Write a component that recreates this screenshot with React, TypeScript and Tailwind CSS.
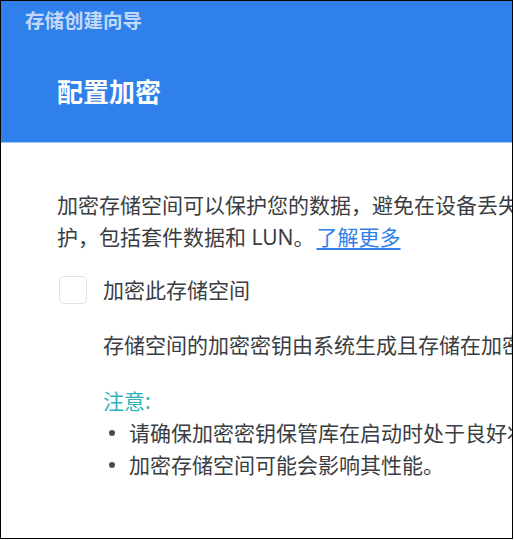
import { Check } from "lucide-react";
import { useState } from "react";

const font = { fontFamily: '"Noto Sans", "Noto Sans CJK SC", sans-serif' };

function Bullet({ children }: { children: React.ReactNode }) {
  return (
    <li className="flex items-center h-[32px] whitespace-nowrap">
      <span className="w-[6px] h-[6px] rounded-full bg-[#4a4d52] ml-[6px] mr-[14px] shrink-0" />
      {children}
    </li>
  );
}

export default function App() {
  const [checked, setChecked] = useState(false);

  return (
    <div
      className="w-[513px] h-[539px] border border-black bg-white overflow-hidden flex flex-col"
      style={font}
    >
      {/* Wizard header */}
      <div className="h-[142px] shrink-0 bg-[#2f80ea] border-b border-[#9fc3f4] flex flex-col">
        <div className="pl-[24px] pt-[5px] text-[19.5px] leading-[29px] font-bold text-[#c2d9f8] whitespace-nowrap">
          存储创建向导
        </div>
        <div className="pl-[56px] mt-[39px] text-[26px] leading-[36px] font-bold text-white whitespace-nowrap">
          配置加密
        </div>
      </div>

      {/* Body */}
      <div className="pl-[56px] pt-[46px] text-[21px] leading-[32px] text-[#3a3d42] w-[800px]">
        <p className="whitespace-nowrap">
          加密存储空间可以保护您的数据，避免在设备丢失或被盗时遭到未经授权的访问。此功能适用于所有数据保
          <br />
          护，包括套件数据和 LUN。
          <a href="#" className="ml-[2px] text-[#2f80ea] underline underline-offset-[3px]">
            了解更多
          </a>
        </p>

        <label className="mt-[21px] flex items-center h-[32px] cursor-pointer select-none">
          <button
            type="button"
            onClick={() => setChecked(!checked)}
            className={
              checked
                ? "ml-[2px] w-[28px] h-[28px] rounded-[5px] border border-[#2f80ea] bg-[#2f80ea] flex items-center justify-center"
                : "ml-[2px] w-[28px] h-[28px] rounded-[5px] border border-[#dde2ea] bg-white flex items-center justify-center"
            }
          >
            {checked && <Check size={18} className="text-white" />}
          </button>
          <span className="ml-[16px] whitespace-nowrap">加密此存储空间</span>
        </label>

        <div className="pl-[46px]">
          <p className="mt-[23px] whitespace-nowrap">
            存储空间的加密密钥由系统生成且存储在加密密钥保管库中。
          </p>
          <p className="mt-[24px] text-[#2cb3b8]">注意:</p>
          <ul>
            <Bullet>请确保加密密钥保管库在启动时处于良好状态，否则将无法访问已加密的存储空间。</Bullet>
            <Bullet>加密存储空间可能会影响其性能。</Bullet>
          </ul>
        </div>
      </div>
    </div>
  );
}
